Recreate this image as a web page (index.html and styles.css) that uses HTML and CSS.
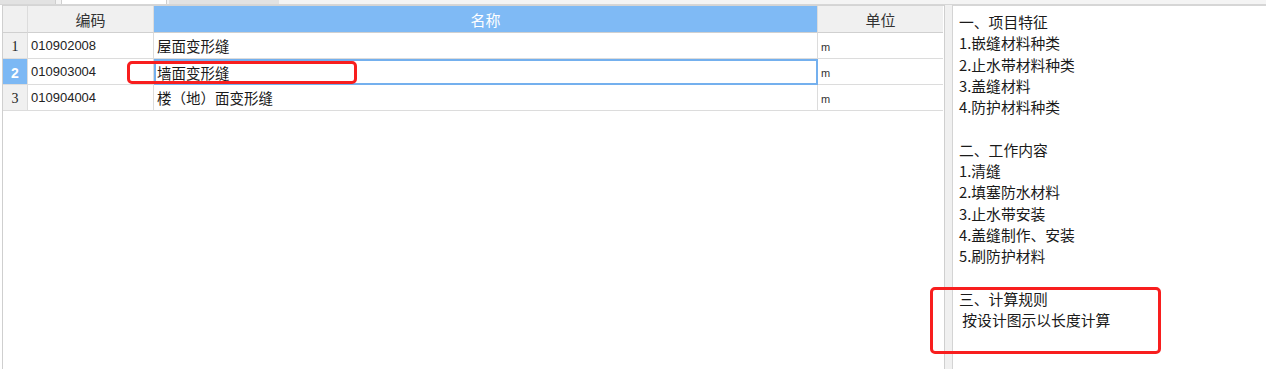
FILE: index.html
```html
<!DOCTYPE html>
<html lang="zh-CN">
<head>
<meta charset="utf-8">
<title>清单</title>
<link rel="stylesheet" href="styles.css">
</head>
<body>
<div class="tabs">
  <div class="tab tab-a"></div>
  <div class="tab tab-b"></div>
  <div class="tab tab-c"></div>
</div>
<div class="main">
  <div class="grid-wrap">
    <div class="row head">
      <div class="cell num"></div>
      <div class="cell hcell">编码</div>
      <div class="cell hcell hsel">名称</div>
      <div class="cell hcell">单位</div>
    </div>
    <div class="row">
      <div class="cell num">1</div>
      <div class="cell code">010902008</div>
      <div class="cell name">屋面变形缝</div>
      <div class="cell unit">m</div>
    </div>
    <div class="row">
      <div class="cell num numsel">2</div>
      <div class="cell code">010903004</div>
      <div class="cell name editing">墙面变形缝</div>
      <div class="cell unit">m</div>
    </div>
    <div class="row">
      <div class="cell num">3</div>
      <div class="cell code">010904004</div>
      <div class="cell name">楼（地）面变形缝</div>
      <div class="cell unit">m</div>
    </div>
    <div class="mark mark-a"></div>
  </div>
  <div class="splitter"></div>
  <div class="panel">
    <div class="line">一、项目特征</div>
    <div class="line">1.嵌缝材料种类</div>
    <div class="line">2.止水带材料种类</div>
    <div class="line">3.盖缝材料</div>
    <div class="line">4.防护材料种类</div>
    <div class="line">&nbsp;</div>
    <div class="line">二、工作内容</div>
    <div class="line">1.清缝</div>
    <div class="line">2.填塞防水材料</div>
    <div class="line">3.止水带安装</div>
    <div class="line">4.盖缝制作、安装</div>
    <div class="line">5.刷防护材料</div>
    <div class="line">&nbsp;</div>
    <div class="line">三、计算规则</div>
    <div class="line">&nbsp;按设计图示以长度计算</div>
  </div>
  <div class="mark mark-b"></div>
</div>
</body>
</html>
```
FILE: styles.css
```css
html, body {
  margin: 0;
  padding: 0;
  background: #ffffff;
  width: 1266px;
  height: 369px;
  overflow: hidden;
  font-family: "Liberation Sans", "Noto Sans CJK SC", sans-serif;
  color: #1a1a1a;
}

.tabs {
  display: flex;
  height: 4px;
  border-bottom: 1px solid #d6d6d6;
  background: #f4f4f4;
}
.tab { height: 4px; }
.tab-a { width: 55px; background: #e2e2e2; border-right: 1px solid #cfcfcf; }
.tab-b { width: 104px; margin-left: 5px; background: #ffffff; border-left: 1px solid #cfcfcf; border-right: 1px solid #cfcfcf; }
.tab-c { width: 110px; margin-left: 2px; background: #e2e2e2; }

.main {
  position: relative;
  display: flex;
  height: 364px;
}

.grid-wrap {
  position: relative;
  width: 941px;
  margin-left: 2px;
  border-left: 1px solid #cfcfcf;
  border-right: 1px solid #cfcfcf;
  background: #ffffff;
}

.row {
  display: grid;
  grid-template-columns: 25px 126px 664px 125px;
  height: 26px;
}
.row.head {
  height: 28px;
  border-top: 1px solid #d4d4d4;
  box-sizing: border-box;
}

.cell {
  box-sizing: border-box;
  border-right: 1px solid #dcdcdc;
  border-bottom: 1px solid #dcdcdc;
  display: flex;
  align-items: center;
  white-space: nowrap;
  overflow: hidden;
}
.row .cell:last-child { border-right: none; }

.head .cell {
  background: #f0f0f0;
  border-bottom: 1px solid #d0d0d0;
  justify-content: center;
  font-size: 15px;
  color: #333333;
  font-family: "Noto Sans CJK SC", sans-serif;
}
.head .hsel {
  background: #7fbaf5;
  color: #ffffff;
}
.head .num { background: #f0f0f0; }

.num {
  background: #f0f0f0;
  justify-content: center;
  font-family: "Liberation Serif", serif;
  font-size: 14px;
  color: #222222;
  padding-top: 3px;
}
.numsel {
  background: #7cb8f4;
  color: #ffffff;
  font-family: "Liberation Sans", sans-serif;
  font-weight: bold;
}

.code {
  padding-left: 3px;
  font-size: 13px;
  color: #222222;
  font-family: "Liberation Sans", sans-serif;
}
.name {
  padding-left: 3px;
  font-size: 14.5px;
  font-family: "Noto Sans CJK SC", sans-serif;
  color: #1a1a1a;
}
.editing {
  border: 2px solid #74b0ee;
  padding-left: 1px;
}
.unit {
  padding-left: 3px;
  font-size: 11px;
  color: #333333;
  font-family: "Liberation Sans", sans-serif;
  padding-top: 2px;
}

.splitter {
  width: 7px;
  background: #f0f0f0;
  border-right: 1px solid #d4d4d4;
}

.panel {
  flex: 1;
  padding: 5px 0 0 6px;
  font-family: "Noto Sans CJK SC", sans-serif;
  font-size: 14.8px;
  line-height: 21.3px;
  color: #1a1a1a;
  border-top: 1px solid #d6d6d6;
}
.line { white-space: pre; height: 21.3px; }

.mark {
  position: absolute;
  border: 3px solid #f81e1e;
  border-radius: 5px;
  box-sizing: border-box;
}
.mark-a {
  left: 124px;
  top: 56px;
  width: 230px;
  height: 23px;
}
.mark-b {
  left: 930px;
  top: 282px;
  width: 231px;
  height: 67px;
}
```
